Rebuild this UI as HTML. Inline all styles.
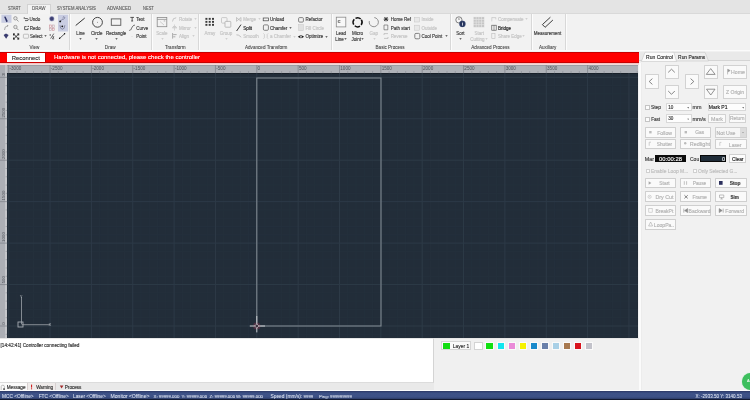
<!DOCTYPE html>
<html><head><meta charset="utf-8">
<style>
*{box-sizing:border-box;margin:0;padding:0}
html,body{width:750px;height:400px;overflow:hidden;will-change:transform;background:#f1f1f1;font-family:"Liberation Sans",sans-serif;color:#333}
.a{position:absolute;white-space:nowrap}
#tabbar{left:0;top:0;width:750px;height:13px;background:#e4e4e4}
.tab{position:absolute;top:4px;font-size:4.6px;color:#444;line-height:9px}
#ribbon{left:0;top:13px;width:750px;height:38px;background:#f2f2f2;border-top:1px solid #d9d9d9;border-bottom:1px solid #fbfbfb}
.sep{position:absolute;top:14px;width:1px;height:36px;background:#d8d8d8;box-shadow:1px 0 0 #fcfcfc}
.glabel{position:absolute;top:43px;font-size:4.6px;color:#444;line-height:7px}
.r{position:absolute;white-space:nowrap;line-height:6px;font-size:4.5px;-webkit-text-stroke-width:0.15px}
.dis{color:#b5b5b5}
#redbar{left:0;top:52px;width:639px;height:11px;background:#fe0000;border-top:1px solid #c80000;border-bottom:1px solid #c80000}
#rulerT{left:0;top:64.8px;width:638px;height:8.2px;background:#afb2b8;border-top:0.8px solid #9c9fa5}
#rulerL{left:0;top:65px;width:7px;height:273px;background:linear-gradient(90deg,#acafb5 0,#acafb5 4.8px,#c4c6ca 5.2px,#c4c6ca 7px)}
#canvas{left:7px;top:73px;width:631px;height:265px;background:#222d39;overflow:hidden;box-shadow:inset -1px 0 0 #161e27, inset 0 1px 0 #182029}
#msg{left:0;top:339px;width:434px;height:44px;background:#fff;border-top:1px solid #e6e6e6}
#layers{left:434px;top:338px;width:205px;height:53px;background:#f0f0f0;border-left:1px solid #dcdcdc}
#msgtabs{left:0;top:383px;width:434px;height:8px;background:#e8e8e8}
#status{left:0;top:391px;width:750px;height:9px;background:#2e4170;color:#e8ecf4;font-size:4.5px;line-height:9px}
#panel{left:640px;top:51px;width:110px;height:340px;background:#f1f1f1;border-left:1px solid #fafafa}
.btn{position:absolute;background:#f9f9f9;border:1px solid #dedede;font-size:4.8px;color:#bdbdbd;text-align:center;line-height:9px}
.sw{position:absolute;top:342px;width:8px;height:8px;border:1px solid #ddd}
</style></head><body>
<div id="tabbar" class="a"></div>
<div id="ribbon" class="a"></div>
<div class="a" style="left:26.8px;top:3.5px;width:23.8px;height:10.5px;background:#f3f3f3;border:1px solid #d2d2d2;border-bottom:none"></div>
<div class="sep" style="left:69px"></div>
<div class="sep" style="left:151px"></div>
<div class="sep" style="left:198px"></div>
<div class="sep" style="left:330.5px"></div>
<div class="sep" style="left:449.6px"></div>
<div class="sep" style="left:530.5px"></div>
<div class="sep" style="left:564.5px"></div>
<div class="r" style="left:8.1px;top:5.9px;color:#505050;font-size:4.9px;-webkit-text-stroke-width:0.08px;transform:scaleX(0.821);transform-origin:0 0;">START</div>
<div class="r" style="left:31.9px;top:5.9px;color:#505050;font-size:4.9px;-webkit-text-stroke-width:0.08px;transform:scaleX(0.919);transform-origin:0 0;">DRAW</div>
<div class="r" style="left:56.8px;top:5.9px;color:#505050;font-size:4.9px;-webkit-text-stroke-width:0.08px;transform:scaleX(0.867);transform-origin:0 0;">SYSTEM ANALYSIS</div>
<div class="r" style="left:107.4px;top:5.9px;color:#505050;font-size:4.9px;-webkit-text-stroke-width:0.08px;transform:scaleX(0.901);transform-origin:0 0;">ADVANCED</div>
<div class="r" style="left:142.6px;top:5.9px;color:#505050;font-size:4.9px;-webkit-text-stroke-width:0.08px;transform:scaleX(0.829);transform-origin:0 0;">NEST</div>
<div class="r" style="left:14.5px;width:40px;text-align:center;top:45.1px;color:#3a3a3a;font-size:4.6px;-webkit-text-stroke-width:0.06px;">View</div>
<div class="r" style="left:90.2px;width:40px;text-align:center;top:45.1px;color:#3a3a3a;font-size:4.6px;-webkit-text-stroke-width:0.06px;">Draw</div>
<div class="r" style="left:155.3px;width:40px;text-align:center;top:45.1px;color:#3a3a3a;font-size:4.6px;-webkit-text-stroke-width:0.06px;">Transform</div>
<div class="r" style="left:245px;width:40px;text-align:center;top:45.1px;color:#3a3a3a;font-size:4.6px;-webkit-text-stroke-width:0.06px;">Advanced Transform</div>
<div class="r" style="left:370.1px;width:40px;text-align:center;top:45.1px;color:#3a3a3a;font-size:4.6px;-webkit-text-stroke-width:0.06px;">Basic Process</div>
<div class="r" style="left:470.4px;width:40px;text-align:center;top:45.1px;color:#3a3a3a;font-size:4.6px;-webkit-text-stroke-width:0.06px;">Advanced Process</div>
<div class="r" style="left:527.7px;width:40px;text-align:center;top:45.1px;color:#3a3a3a;font-size:4.6px;-webkit-text-stroke-width:0.06px;">Auxiliary</div>
<div class="r" style="left:29.5px;top:16.9px;color:#3c3c3c;font-size:4.5px;">Undo</div>
<div class="r" style="left:29.8px;top:25.6px;color:#3c3c3c;font-size:4.5px;">Redo</div>
<div class="r" style="left:30px;top:34.2px;color:#3c3c3c;font-size:4.5px;">Select</div>
<svg class="a" style="left:43.8px;top:35.3px" width="3" height="2"><path d="M0.3 0.3 L2.7 0.3 L1.5 1.8Z" fill="#3c3c3c"/></svg>
<div class="r" style="left:60.400000000000006px;width:40px;text-align:center;top:31.1px;color:#3c3c3c;font-size:4.5px;">Line</div>
<svg class="a" style="left:78.9px;top:37.5px" width="3" height="2"><path d="M0.3 0.3 L2.7 0.3 L1.5 1.8Z" fill="#3c3c3c"/></svg>
<div class="r" style="left:76.8px;width:40px;text-align:center;top:31.1px;color:#3c3c3c;font-size:4.5px;">Circle</div>
<svg class="a" style="left:95.3px;top:37.5px" width="3" height="2"><path d="M0.3 0.3 L2.7 0.3 L1.5 1.8Z" fill="#3c3c3c"/></svg>
<div class="r" style="left:96.2px;width:40px;text-align:center;top:31.1px;color:#3c3c3c;font-size:4.5px;">Rectangle</div>
<svg class="a" style="left:114.5px;top:37.5px" width="3" height="2"><path d="M0.3 0.3 L2.7 0.3 L1.5 1.8Z" fill="#3c3c3c"/></svg>
<div class="r" style="left:136.3px;top:16.8px;color:#3c3c3c;font-size:4.5px;">Text</div>
<div class="r" style="left:136.3px;top:25.6px;color:#3c3c3c;font-size:4.5px;">Curve</div>
<div class="r" style="left:136.3px;top:34.1px;color:#3c3c3c;font-size:4.5px;">Point</div>
<div class="r" style="left:142px;width:40px;text-align:center;top:31.1px;color:#c4c4c4;font-size:4.5px;">Scale</div>
<svg class="a" style="left:160.5px;top:37.5px" width="3" height="2"><path d="M0.3 0.3 L2.7 0.3 L1.5 1.8Z" fill="#c4c4c4"/></svg>
<div class="r" style="left:178.9px;top:17.0px;color:#c4c4c4;font-size:4.5px;">Rotate</div>
<svg class="a" style="left:193.5px;top:18.1px" width="3" height="2"><path d="M0.3 0.3 L2.7 0.3 L1.5 1.8Z" fill="#c4c4c4"/></svg>
<div class="r" style="left:178.9px;top:25.7px;color:#c4c4c4;font-size:4.5px;">Mirror</div>
<svg class="a" style="left:193.5px;top:26.8px" width="3" height="2"><path d="M0.3 0.3 L2.7 0.3 L1.5 1.8Z" fill="#c4c4c4"/></svg>
<div class="r" style="left:178.9px;top:34.3px;color:#c4c4c4;font-size:4.5px;">Align</div>
<svg class="a" style="left:191.8px;top:35.4px" width="3" height="2"><path d="M0.3 0.3 L2.7 0.3 L1.5 1.8Z" fill="#c4c4c4"/></svg>
<div class="r" style="left:190px;width:40px;text-align:center;top:31.1px;color:#c4c4c4;font-size:4.5px;">Array</div>
<div class="r" style="left:206px;width:40px;text-align:center;top:31.1px;color:#c4c4c4;font-size:4.5px;">Group</div>
<svg class="a" style="left:224.5px;top:37.5px" width="3" height="2"><path d="M0.3 0.3 L2.7 0.3 L1.5 1.8Z" fill="#c4c4c4"/></svg>
<div class="r" style="left:243.3px;top:17.2px;color:#c4c4c4;font-size:4.5px;">Merge</div>
<svg class="a" style="left:257.9px;top:18.3px" width="3" height="2"><path d="M0.3 0.3 L2.7 0.3 L1.5 1.8Z" fill="#c4c4c4"/></svg>
<div class="r" style="left:243.3px;top:25.6px;color:#222;font-size:4.5px;">Split</div>
<div class="r" style="left:243.3px;top:34.4px;color:#c4c4c4;font-size:4.5px;">Smooth</div>
<div class="r" style="left:269.9px;top:17.2px;color:#3c3c3c;font-size:4.5px;">Unload</div>
<div class="r" style="left:269.9px;top:25.6px;color:#3c3c3c;font-size:4.5px;">Chamfer</div>
<svg class="a" style="left:289.0px;top:26.7px" width="3" height="2"><path d="M0.3 0.3 L2.7 0.3 L1.5 1.8Z" fill="#3c3c3c"/></svg>
<div class="r" style="left:269.9px;top:34.4px;color:#c4c4c4;font-size:4.5px;">a Chamfer</div>
<svg class="a" style="left:292.5px;top:35.5px" width="3" height="2"><path d="M0.3 0.3 L2.7 0.3 L1.5 1.8Z" fill="#c4c4c4"/></svg>
<div class="r" style="left:305.4px;top:17.2px;color:#3c3c3c;font-size:4.5px;">Refactor</div>
<div class="r" style="left:305.4px;top:25.6px;color:#c4c4c4;font-size:4.5px;">Fill Circle</div>
<div class="r" style="left:305.4px;top:34.4px;color:#3c3c3c;font-size:4.5px;">Optimize</div>
<svg class="a" style="left:325.1px;top:35.5px" width="3" height="2"><path d="M0.3 0.3 L2.7 0.3 L1.5 1.8Z" fill="#3c3c3c"/></svg>
<div class="r" style="left:321px;width:40px;text-align:center;top:30.9px;color:#3c3c3c;font-size:4.5px;">Lead</div>
<div class="r" style="left:335.3px;top:36.7px;color:#3c3c3c;font-size:4.5px;">Line</div>
<svg class="a" style="left:344.1px;top:37.8px" width="3" height="2"><path d="M0.3 0.3 L2.7 0.3 L1.5 1.8Z" fill="#3c3c3c"/></svg>
<div class="r" style="left:337.6px;width:40px;text-align:center;top:30.9px;color:#3c3c3c;font-size:4.5px;">Micro</div>
<div class="r" style="left:351.4px;top:36.7px;color:#3c3c3c;font-size:4.5px;">Joint</div>
<svg class="a" style="left:360.9px;top:37.8px" width="3" height="2"><path d="M0.3 0.3 L2.7 0.3 L1.5 1.8Z" fill="#3c3c3c"/></svg>
<div class="r" style="left:353.7px;width:40px;text-align:center;top:30.9px;color:#c4c4c4;font-size:4.5px;">Gap</div>
<svg class="a" style="left:372.5px;top:37.5px" width="3" height="2"><path d="M0.3 0.3 L2.7 0.3 L1.5 1.8Z" fill="#c4c4c4"/></svg>
<div class="r" style="left:390.8px;top:17.1px;color:#3c3c3c;font-size:4.5px;">Home Ref</div>
<div class="r" style="left:390.8px;top:25.8px;color:#3c3c3c;font-size:4.5px;">Path start</div>
<div class="r" style="left:390.8px;top:34.3px;color:#c4c4c4;font-size:4.5px;">Reverse</div>
<div class="r" style="left:421.5px;top:17.1px;color:#c4c4c4;font-size:4.5px;">Inside</div>
<div class="r" style="left:421.5px;top:25.8px;color:#c4c4c4;font-size:4.5px;">Outside</div>
<div class="r" style="left:421.5px;top:34.3px;color:#3c3c3c;font-size:4.5px;">Cool Point</div>
<svg class="a" style="left:444.5px;top:35.4px" width="3" height="2"><path d="M0.3 0.3 L2.7 0.3 L1.5 1.8Z" fill="#3c3c3c"/></svg>
<div class="r" style="left:440.5px;width:40px;text-align:center;top:30.6px;color:#3c3c3c;font-size:4.5px;">Sort</div>
<svg class="a" style="left:459.0px;top:37.5px" width="3" height="2"><path d="M0.3 0.3 L2.7 0.3 L1.5 1.8Z" fill="#3c3c3c"/></svg>
<div class="r" style="left:459.3px;width:40px;text-align:center;top:30.9px;color:#c4c4c4;font-size:4.5px;">Start</div>
<div class="r" style="left:470.2px;top:36.7px;color:#c4c4c4;font-size:4.5px;">Cutting</div>
<svg class="a" style="left:485.3px;top:37.8px" width="3" height="2"><path d="M0.3 0.3 L2.7 0.3 L1.5 1.8Z" fill="#c4c4c4"/></svg>
<div class="r" style="left:498px;top:17.1px;color:#c4c4c4;font-size:4.5px;">Compensate</div>
<svg class="a" style="left:525.2px;top:18.2px" width="3" height="2"><path d="M0.3 0.3 L2.7 0.3 L1.5 1.8Z" fill="#c4c4c4"/></svg>
<div class="r" style="left:498px;top:25.9px;color:#222;font-size:4.5px;">Bridge</div>
<div class="r" style="left:498px;top:34.2px;color:#c4c4c4;font-size:4.5px;">Share Edge</div>
<svg class="a" style="left:522.2px;top:35.3px" width="3" height="2"><path d="M0.3 0.3 L2.7 0.3 L1.5 1.8Z" fill="#c4c4c4"/></svg>
<div class="r" style="left:527.5px;width:40px;text-align:center;top:30.6px;color:#3c3c3c;font-size:4.5px;">Measurement</div>
<svg class="a" style="left:0;top:0" width="750" height="52" viewBox="0 0 750 52"><rect x="1.4" y="14.7" width="10.1" height="8.1" fill="#c9cde2"/><rect x="58" y="14.7" width="10.1" height="16.8" fill="#c9cde2"/><path d="M4.1 16.7 L5.5 16.6 L7.8 21.2 L6.4 22.2 Z" fill="#2b3063"/><circle cx="15.4" cy="18.3" r="1.7" fill="#e4e4e4" stroke="#8a8a8a" stroke-width="0.75"/><line x1="16.6" y1="19.5" x2="18.5" y2="21.400000000000002" stroke="#8a8a8a" stroke-width="0.9"/><circle cx="15.4" cy="27.0" r="1.7" fill="#e4e4e4" stroke="#8a8a8a" stroke-width="0.75"/><line x1="16.6" y1="28.2" x2="18.5" y2="30.1" stroke="#8a8a8a" stroke-width="0.9"/><path d="M24.6 18.6 H27.2 Q28.3 18.6 28.3 19.6 Q28.3 20.6 27.2 20.6 H25" fill="none" stroke="#333" stroke-width="0.75"/><circle cx="24.2" cy="17.9" r="0.55" fill="#222"/><path d="M24.6 26.6 V29.6 H28 V28 M24.6 26.6 H26.6" fill="none" stroke="#333" stroke-width="0.75"/><circle cx="28.2" cy="26.4" r="0.6" fill="#222"/><rect x="23.4" y="34.2" width="5.2" height="4" rx="0.6" fill="none" stroke="#aaa" stroke-width="0.7"/><path d="M4.5 30 Q4.5 26 7.8 25.8" fill="none" stroke="#999" stroke-width="0.8"/><path d="M7 24.8 L8.6 25.8 L7 26.8Z" fill="#999"/><path d="M3.6 35 L6 33.5 L8.6 35 L6.1 38.7 Z" fill="#3a3c70"/><path d="M13.5 34 L18.7 39 M18.7 34 L13.5 39" stroke="#222" stroke-width="0.9"/><path d="M13 33.5h2v0.9h-1.1v1.1H13z M19.2 33.5h-2v0.9h1.1v1.1h0.9z M13 39.5h2v-0.9h-1.1v-1.1H13z M19.2 39.5h-2v-0.9h1.1v-1.1h0.9z" fill="#222"/><rect x="49.3" y="16.4" width="5" height="4.8" fill="#dfe0ea"/><circle cx="51.8" cy="18.8" r="2.2" fill="#3c3e72" stroke="#8c8eb4" stroke-width="0.5"/><rect x="49.4" y="24.6" width="5" height="6.2" fill="#f4eef0"/><rect x="49.7" y="25" width="1.9" height="2.3" fill="none" stroke="#c88a92" stroke-width="0.55"/><rect x="52.3" y="25" width="1.9" height="2.3" fill="none" stroke="#b8a0a8" stroke-width="0.55"/><rect x="49.7" y="28.2" width="1.9" height="2.3" fill="none" stroke="#b8a0a8" stroke-width="0.55"/><rect x="52.3" y="28.2" width="1.9" height="2.3" fill="none" stroke="#c88a92" stroke-width="0.55"/><path d="M50.2 34 V36 M53.8 33.6 L50.6 38.6 M52.4 36.8 H54 L52.4 38.8 H54.2" fill="none" stroke="#333" stroke-width="0.7"/><circle cx="45.3" cy="36.4" r="0" fill="#333"/><path d="M60.2 21.2 L62.4 19.4 L63.4 19.4 L64.8 17.8 L64 16.6 L62.6 17.8" fill="none" stroke="#6e7190" stroke-width="0.75"/><circle cx="60.2" cy="21.4" r="0.95" fill="#111"/><path d="M60 25.2 Q60 29.2 62.4 29.2 Q64.8 29.2 64.8 25.2" fill="none" stroke="#7a7d98" stroke-width="0.8"/><circle cx="62.3" cy="26.3" r="0.9" fill="#111"/><line x1="59.5" y1="38.5" x2="64.8" y2="33.6" stroke="#333" stroke-width="0.8"/><circle cx="59.6" cy="38.3" r="0.7" fill="#111"/><circle cx="64.6" cy="33.8" r="0.7" fill="#111"/><line x1="75.7" y1="25.5" x2="84.7" y2="18.1" stroke="#333" stroke-width="1"/><circle cx="97.5" cy="22.3" r="4.9" fill="none" stroke="#333" stroke-width="0.9"/><circle cx="97.5" cy="22.3" r="0.45" fill="#444"/><rect x="111.3" y="18.9" width="9.5" height="6.4" fill="none" stroke="#5a5a5a" stroke-width="0.9"/><path d="M130.3 17.4 H134 M132.15 17.4 V21 M131.2 21 H133.1" fill="none" stroke="#333" stroke-width="0.8"/><path d="M129.3 30.4 C131.2 30.4 131.2 28.6 131.9 27.6 C132.6 26.6 133 25.2 134.9 25.1" fill="none" stroke="#333" stroke-width="0.75"/><circle cx="132" cy="36.4" r="0.25" fill="#666"/><rect x="157.2" y="17.4" width="9.6" height="9.3" fill="none" stroke="#8a8a8a" stroke-width="0.8"/><line x1="157.2" y1="19.4" x2="166.8" y2="19.4" stroke="#8a8a8a" stroke-width="0.7"/><path d="M160 21.5 L164 25 M163.5 21 L165 20.4 L164.6 22" fill="none" stroke="#aaa" stroke-width="0.5"/><path d="M172.5 21.5 Q172.5 17.8 176.2 17.8" fill="none" stroke="#b8b8b8" stroke-width="0.8"/><path d="M174.5 24.5 V30.5 M173.8 26 L172.4 28 L173.8 28 Z M175.2 26 L176.8 28 L175.2 28Z" fill="none" stroke="#c0c0c0" stroke-width="0.6"/><path d="M172.6 33 V38.6 M173.2 34.6 H176.6 M173.2 36.8 H175.4" fill="none" stroke="#999" stroke-width="0.8"/><rect x="205.4" y="17.9" width="2" height="1.9" fill="#3a3a3a"/><rect x="205.4" y="20.9" width="2" height="1.9" fill="#3a3a3a"/><rect x="205.4" y="23.9" width="2" height="1.9" fill="#3a3a3a"/><rect x="208.7" y="17.9" width="2" height="1.9" fill="#3a3a3a"/><rect x="208.7" y="20.9" width="2" height="1.9" fill="#3a3a3a"/><rect x="208.7" y="23.9" width="2" height="1.9" fill="#3a3a3a"/><rect x="212.0" y="17.9" width="2" height="1.9" fill="#3a3a3a"/><rect x="212.0" y="20.9" width="2" height="1.9" fill="#3a3a3a"/><rect x="212.0" y="23.9" width="2" height="1.9" fill="#3a3a3a"/><rect x="221.5" y="17.6" width="5.5" height="5.5" rx="0.8" fill="#f3f3f3" stroke="#b8b8b8" stroke-width="0.7"/><rect x="225" y="21.4" width="5.8" height="5.8" rx="0.6" fill="#f3f3f3" stroke="#a8a8a8" stroke-width="0.7"/><path d="M236.5 17.6 L241 21.2 M241 17.6 L236.5 21.2 M236.5 17.4 V21.4 M241 17.4 V21.4" fill="none" stroke="#aaa" stroke-width="0.6"/><line x1="236.6" y1="31" x2="241" y2="24.6" stroke="#222" stroke-width="0.9"/><path d="M236.4 34.8 Q238.6 34.4 241.2 37.2" fill="none" stroke="#aaa" stroke-width="0.7"/><rect x="263.2" y="18" width="5.3" height="2.8" fill="none" stroke="#444" stroke-width="0.7"/><rect x="263.4" y="24.9" width="5" height="5.4" rx="1.1" fill="none" stroke="#555" stroke-width="0.7"/><path d="M263.4 33.4 L264.4 34.4 M268.2 33.4 L267.2 34.4 M263.4 38.8 L264.4 37.8 M268.2 38.8 L267.2 37.8 M264.4 34.4 V37.8 M267.2 34.4 V37.8" fill="none" stroke="#bbb" stroke-width="0.6"/><rect x="298.6" y="17.6" width="4.8" height="4.5" rx="1" fill="none" stroke="#555" stroke-width="0.7"/><rect x="298.6" y="24.6" width="4.8" height="6" fill="#e0e0e0" stroke="#c8c8c8" stroke-width="0.5"/><path d="M297.8 36.7 Q300.9 33.6 304.1 36.7 Q300.9 39.6 297.8 36.7Z" fill="#1a1a1a"/><circle cx="300.95" cy="36.7" r="0.95" fill="#f3f3f3"/><circle cx="300.95" cy="36.7" r="0.45" fill="#1a1a1a"/><rect x="336.3" y="17.2" width="9.5" height="9.7" fill="#f8f8f8" stroke="#8a8a8a" stroke-width="0.8"/><path d="M340.4 20.6 H338.2 V22.4 H340.4" fill="none" stroke="#333" stroke-width="0.6"/><circle cx="357.6" cy="22.3" r="4.5" fill="none" stroke="#111" stroke-width="1.5" stroke-dasharray="5.4 1.67" transform="rotate(-34.4 357.6 22.3)"/><path d="M374.3 17.55 A4.6 4.6 0 1 1 369.3 21.1" fill="none" stroke="#8a8a8a" stroke-width="0.95"/><path d="M384 17.4 L388 21 M388 17.4 L384 21 M386 17 V21.4 M383.7 19.2 H388.3" stroke="#222" stroke-width="0.8"/><path d="M384 25 H387.8 V29.8 H384 Z" fill="none" stroke="#555" stroke-width="0.6"/><path d="M384 33.6 H388 M384 38.4 H388 M384 33.6 V35 M388 38.4 V37" fill="none" stroke="#aaa" stroke-width="0.6"/><rect x="414.6" y="17.4" width="5" height="4.6" fill="#e8e8e8" stroke="#c4c4c4" stroke-width="0.5"/><rect x="414.6" y="25.2" width="5" height="5" fill="#e8e8e8" stroke="#c4c4c4" stroke-width="0.5"/><rect x="414.8" y="33.4" width="5" height="5.4" rx="1.2" fill="none" stroke="#555" stroke-width="0.7"/><circle cx="458.9" cy="19.9" r="3.1" fill="#f6f6f6" stroke="#555" stroke-width="0.7"/><path d="M458.6 17.9 L458.9 19.9 L460 18.4" fill="none" stroke="#555" stroke-width="0.45"/><circle cx="462.4" cy="23.9" r="3.1" fill="#26355e" stroke="#5a6890" stroke-width="0.3"/><rect x="462" y="23" width="0.8" height="2.6" fill="#e8ecf4"/><circle cx="462.4" cy="22.2" r="0.42" fill="#e8ecf4"/><rect x="473.4" y="16.8" width="11.2" height="10.8" fill="#e6e6e6"/><rect x="473.70" y="17.10" width="2.1" height="2.0" fill="#c6c6c6"/><rect x="473.70" y="19.75" width="2.1" height="2.0" fill="#c6c6c6"/><rect x="473.70" y="22.40" width="2.1" height="2.0" fill="#c6c6c6"/><rect x="473.70" y="25.05" width="2.1" height="2.0" fill="#c6c6c6"/><rect x="476.45" y="17.10" width="2.1" height="2.0" fill="#c6c6c6"/><rect x="476.45" y="19.75" width="2.1" height="2.0" fill="#c6c6c6"/><rect x="476.45" y="22.40" width="2.1" height="2.0" fill="#c6c6c6"/><rect x="476.45" y="25.05" width="2.1" height="2.0" fill="#c6c6c6"/><rect x="479.20" y="17.10" width="2.1" height="2.0" fill="#c6c6c6"/><rect x="479.20" y="19.75" width="2.1" height="2.0" fill="#c6c6c6"/><rect x="479.20" y="22.40" width="2.1" height="2.0" fill="#c6c6c6"/><rect x="479.20" y="25.05" width="2.1" height="2.0" fill="#c6c6c6"/><rect x="481.95" y="17.10" width="2.1" height="2.0" fill="#c6c6c6"/><rect x="481.95" y="19.75" width="2.1" height="2.0" fill="#c6c6c6"/><rect x="481.95" y="22.40" width="2.1" height="2.0" fill="#c6c6c6"/><rect x="481.95" y="25.05" width="2.1" height="2.0" fill="#c6c6c6"/><path d="M491.8 17.4 V21.4 M491.8 17.6 H495.8 V19.4" fill="none" stroke="#bbb" stroke-width="0.6"/><rect x="491.8" y="25.2" width="4.4" height="5" fill="none" stroke="#444" stroke-width="0.6"/><line x1="494" y1="25.2" x2="494" y2="30.2" stroke="#444" stroke-width="0.5"/><rect x="491.8" y="33.6" width="3.2" height="5" fill="none" stroke="#bbb" stroke-width="0.6"/><path d="M550.4 17.2 L542.4 24.6 L545.1 27.3 L552.9 20" fill="none" stroke="#333" stroke-width="0.95" stroke-linejoin="round"/></svg>
<div id="redbar" class="a">
  <div class="a" style="left:6.5px;top:0;width:38.7px;height:9px;background:#fff;font-size:5.9px;line-height:10.6px;text-align:center;color:#2a2a2a;box-shadow:0.6px 0 0 #a00000;-webkit-text-stroke-width:0.12px">Reconnect</div>
  <div class="a" style="left:54px;top:0;font-size:6px;line-height:9px;color:#fff;-webkit-text-stroke-width:0.12px">Hardware is not connected, please check the controller</div>
</div>
<div class="a" style="left:0;top:63px;width:639px;height:1.8px;background:linear-gradient(#f4b8b8,#f2e6e6)"></div>
<div id="rulerT" class="a"></div>
<svg class="a" style="left:7px;top:65px" width="631" height="8" viewBox="0 0 631 8">
<line x1="1.70" y1="0" x2="1.70" y2="8" stroke="#7c7f86" stroke-width="0.7"/>
<text x="2.50" y="5.3" font-size="4.6" fill="#50535a" font-family="Liberation Sans">-3000</text>
<line x1="9.97" y1="6" x2="9.97" y2="8" stroke="#8a8d94" stroke-width="0.6"/>
<line x1="18.24" y1="6" x2="18.24" y2="8" stroke="#8a8d94" stroke-width="0.6"/>
<line x1="26.51" y1="6" x2="26.51" y2="8" stroke="#8a8d94" stroke-width="0.6"/>
<line x1="34.78" y1="6" x2="34.78" y2="8" stroke="#8a8d94" stroke-width="0.6"/>
<line x1="43.05" y1="0" x2="43.05" y2="8" stroke="#7c7f86" stroke-width="0.7"/>
<text x="43.85" y="5.3" font-size="4.6" fill="#50535a" font-family="Liberation Sans">-2500</text>
<line x1="51.32" y1="6" x2="51.32" y2="8" stroke="#8a8d94" stroke-width="0.6"/>
<line x1="59.59" y1="6" x2="59.59" y2="8" stroke="#8a8d94" stroke-width="0.6"/>
<line x1="67.86" y1="6" x2="67.86" y2="8" stroke="#8a8d94" stroke-width="0.6"/>
<line x1="76.13" y1="6" x2="76.13" y2="8" stroke="#8a8d94" stroke-width="0.6"/>
<line x1="84.40" y1="0" x2="84.40" y2="8" stroke="#7c7f86" stroke-width="0.7"/>
<text x="85.20" y="5.3" font-size="4.6" fill="#50535a" font-family="Liberation Sans">-2000</text>
<line x1="92.67" y1="6" x2="92.67" y2="8" stroke="#8a8d94" stroke-width="0.6"/>
<line x1="100.94" y1="6" x2="100.94" y2="8" stroke="#8a8d94" stroke-width="0.6"/>
<line x1="109.21" y1="6" x2="109.21" y2="8" stroke="#8a8d94" stroke-width="0.6"/>
<line x1="117.48" y1="6" x2="117.48" y2="8" stroke="#8a8d94" stroke-width="0.6"/>
<line x1="125.75" y1="0" x2="125.75" y2="8" stroke="#7c7f86" stroke-width="0.7"/>
<text x="126.55" y="5.3" font-size="4.6" fill="#50535a" font-family="Liberation Sans">-1500</text>
<line x1="134.02" y1="6" x2="134.02" y2="8" stroke="#8a8d94" stroke-width="0.6"/>
<line x1="142.29" y1="6" x2="142.29" y2="8" stroke="#8a8d94" stroke-width="0.6"/>
<line x1="150.56" y1="6" x2="150.56" y2="8" stroke="#8a8d94" stroke-width="0.6"/>
<line x1="158.83" y1="6" x2="158.83" y2="8" stroke="#8a8d94" stroke-width="0.6"/>
<line x1="167.10" y1="0" x2="167.10" y2="8" stroke="#7c7f86" stroke-width="0.7"/>
<text x="167.90" y="5.3" font-size="4.6" fill="#50535a" font-family="Liberation Sans">-1000</text>
<line x1="175.37" y1="6" x2="175.37" y2="8" stroke="#8a8d94" stroke-width="0.6"/>
<line x1="183.64" y1="6" x2="183.64" y2="8" stroke="#8a8d94" stroke-width="0.6"/>
<line x1="191.91" y1="6" x2="191.91" y2="8" stroke="#8a8d94" stroke-width="0.6"/>
<line x1="200.18" y1="6" x2="200.18" y2="8" stroke="#8a8d94" stroke-width="0.6"/>
<line x1="208.45" y1="0" x2="208.45" y2="8" stroke="#7c7f86" stroke-width="0.7"/>
<text x="209.25" y="5.3" font-size="4.6" fill="#50535a" font-family="Liberation Sans">-500</text>
<line x1="216.72" y1="6" x2="216.72" y2="8" stroke="#8a8d94" stroke-width="0.6"/>
<line x1="224.99" y1="6" x2="224.99" y2="8" stroke="#8a8d94" stroke-width="0.6"/>
<line x1="233.26" y1="6" x2="233.26" y2="8" stroke="#8a8d94" stroke-width="0.6"/>
<line x1="241.53" y1="6" x2="241.53" y2="8" stroke="#8a8d94" stroke-width="0.6"/>
<line x1="249.80" y1="0" x2="249.80" y2="8" stroke="#7c7f86" stroke-width="0.7"/>
<text x="250.60" y="5.3" font-size="4.6" fill="#50535a" font-family="Liberation Sans">0</text>
<line x1="258.07" y1="6" x2="258.07" y2="8" stroke="#8a8d94" stroke-width="0.6"/>
<line x1="266.34" y1="6" x2="266.34" y2="8" stroke="#8a8d94" stroke-width="0.6"/>
<line x1="274.61" y1="6" x2="274.61" y2="8" stroke="#8a8d94" stroke-width="0.6"/>
<line x1="282.88" y1="6" x2="282.88" y2="8" stroke="#8a8d94" stroke-width="0.6"/>
<line x1="291.15" y1="0" x2="291.15" y2="8" stroke="#7c7f86" stroke-width="0.7"/>
<text x="291.95" y="5.3" font-size="4.6" fill="#50535a" font-family="Liberation Sans">500</text>
<line x1="299.42" y1="6" x2="299.42" y2="8" stroke="#8a8d94" stroke-width="0.6"/>
<line x1="307.69" y1="6" x2="307.69" y2="8" stroke="#8a8d94" stroke-width="0.6"/>
<line x1="315.96" y1="6" x2="315.96" y2="8" stroke="#8a8d94" stroke-width="0.6"/>
<line x1="324.23" y1="6" x2="324.23" y2="8" stroke="#8a8d94" stroke-width="0.6"/>
<line x1="332.50" y1="0" x2="332.50" y2="8" stroke="#7c7f86" stroke-width="0.7"/>
<text x="333.30" y="5.3" font-size="4.6" fill="#50535a" font-family="Liberation Sans">1000</text>
<line x1="340.77" y1="6" x2="340.77" y2="8" stroke="#8a8d94" stroke-width="0.6"/>
<line x1="349.04" y1="6" x2="349.04" y2="8" stroke="#8a8d94" stroke-width="0.6"/>
<line x1="357.31" y1="6" x2="357.31" y2="8" stroke="#8a8d94" stroke-width="0.6"/>
<line x1="365.58" y1="6" x2="365.58" y2="8" stroke="#8a8d94" stroke-width="0.6"/>
<line x1="373.85" y1="0" x2="373.85" y2="8" stroke="#7c7f86" stroke-width="0.7"/>
<text x="374.65" y="5.3" font-size="4.6" fill="#50535a" font-family="Liberation Sans">1500</text>
<line x1="382.12" y1="6" x2="382.12" y2="8" stroke="#8a8d94" stroke-width="0.6"/>
<line x1="390.39" y1="6" x2="390.39" y2="8" stroke="#8a8d94" stroke-width="0.6"/>
<line x1="398.66" y1="6" x2="398.66" y2="8" stroke="#8a8d94" stroke-width="0.6"/>
<line x1="406.93" y1="6" x2="406.93" y2="8" stroke="#8a8d94" stroke-width="0.6"/>
<line x1="415.20" y1="0" x2="415.20" y2="8" stroke="#7c7f86" stroke-width="0.7"/>
<text x="416.00" y="5.3" font-size="4.6" fill="#50535a" font-family="Liberation Sans">2000</text>
<line x1="423.47" y1="6" x2="423.47" y2="8" stroke="#8a8d94" stroke-width="0.6"/>
<line x1="431.74" y1="6" x2="431.74" y2="8" stroke="#8a8d94" stroke-width="0.6"/>
<line x1="440.01" y1="6" x2="440.01" y2="8" stroke="#8a8d94" stroke-width="0.6"/>
<line x1="448.28" y1="6" x2="448.28" y2="8" stroke="#8a8d94" stroke-width="0.6"/>
<line x1="456.55" y1="0" x2="456.55" y2="8" stroke="#7c7f86" stroke-width="0.7"/>
<text x="457.35" y="5.3" font-size="4.6" fill="#50535a" font-family="Liberation Sans">2500</text>
<line x1="464.82" y1="6" x2="464.82" y2="8" stroke="#8a8d94" stroke-width="0.6"/>
<line x1="473.09" y1="6" x2="473.09" y2="8" stroke="#8a8d94" stroke-width="0.6"/>
<line x1="481.36" y1="6" x2="481.36" y2="8" stroke="#8a8d94" stroke-width="0.6"/>
<line x1="489.63" y1="6" x2="489.63" y2="8" stroke="#8a8d94" stroke-width="0.6"/>
<line x1="497.90" y1="0" x2="497.90" y2="8" stroke="#7c7f86" stroke-width="0.7"/>
<text x="498.70" y="5.3" font-size="4.6" fill="#50535a" font-family="Liberation Sans">3000</text>
<line x1="506.17" y1="6" x2="506.17" y2="8" stroke="#8a8d94" stroke-width="0.6"/>
<line x1="514.44" y1="6" x2="514.44" y2="8" stroke="#8a8d94" stroke-width="0.6"/>
<line x1="522.71" y1="6" x2="522.71" y2="8" stroke="#8a8d94" stroke-width="0.6"/>
<line x1="530.98" y1="6" x2="530.98" y2="8" stroke="#8a8d94" stroke-width="0.6"/>
<line x1="539.25" y1="0" x2="539.25" y2="8" stroke="#7c7f86" stroke-width="0.7"/>
<text x="540.05" y="5.3" font-size="4.6" fill="#50535a" font-family="Liberation Sans">3500</text>
<line x1="547.52" y1="6" x2="547.52" y2="8" stroke="#8a8d94" stroke-width="0.6"/>
<line x1="555.79" y1="6" x2="555.79" y2="8" stroke="#8a8d94" stroke-width="0.6"/>
<line x1="564.06" y1="6" x2="564.06" y2="8" stroke="#8a8d94" stroke-width="0.6"/>
<line x1="572.33" y1="6" x2="572.33" y2="8" stroke="#8a8d94" stroke-width="0.6"/>
<line x1="580.60" y1="0" x2="580.60" y2="8" stroke="#7c7f86" stroke-width="0.7"/>
<text x="581.40" y="5.3" font-size="4.6" fill="#50535a" font-family="Liberation Sans">4000</text>
<line x1="588.87" y1="6" x2="588.87" y2="8" stroke="#8a8d94" stroke-width="0.6"/>
<line x1="597.14" y1="6" x2="597.14" y2="8" stroke="#8a8d94" stroke-width="0.6"/>
<line x1="605.41" y1="6" x2="605.41" y2="8" stroke="#8a8d94" stroke-width="0.6"/>
<line x1="613.68" y1="6" x2="613.68" y2="8" stroke="#8a8d94" stroke-width="0.6"/>
<line x1="630.22" y1="6" x2="630.22" y2="8" stroke="#8a8d94" stroke-width="0.6"/>
</svg>
<div id="rulerL" class="a"></div>
<svg class="a" style="left:0px;top:73px" width="7" height="265" viewBox="0 0 7 265">
<line x1="0" y1="4.30" x2="7" y2="4.30" stroke="#7c7f86" stroke-width="0.7"/>
<text transform="translate(5,3.10) rotate(-90)" font-size="4.4" fill="#55585f" font-family="Liberation Sans">3000</text>
<line x1="5.6" y1="12.59" x2="7" y2="12.59" stroke="#8a8d94" stroke-width="0.6"/>
<line x1="5.6" y1="20.88" x2="7" y2="20.88" stroke="#8a8d94" stroke-width="0.6"/>
<line x1="5.6" y1="29.17" x2="7" y2="29.17" stroke="#8a8d94" stroke-width="0.6"/>
<line x1="5.6" y1="37.46" x2="7" y2="37.46" stroke="#8a8d94" stroke-width="0.6"/>
<line x1="0" y1="45.75" x2="7" y2="45.75" stroke="#7c7f86" stroke-width="0.7"/>
<text transform="translate(5,44.55) rotate(-90)" font-size="4.4" fill="#55585f" font-family="Liberation Sans">2500</text>
<line x1="5.6" y1="54.04" x2="7" y2="54.04" stroke="#8a8d94" stroke-width="0.6"/>
<line x1="5.6" y1="62.33" x2="7" y2="62.33" stroke="#8a8d94" stroke-width="0.6"/>
<line x1="5.6" y1="70.62" x2="7" y2="70.62" stroke="#8a8d94" stroke-width="0.6"/>
<line x1="5.6" y1="78.91" x2="7" y2="78.91" stroke="#8a8d94" stroke-width="0.6"/>
<line x1="0" y1="87.20" x2="7" y2="87.20" stroke="#7c7f86" stroke-width="0.7"/>
<text transform="translate(5,86.00) rotate(-90)" font-size="4.4" fill="#55585f" font-family="Liberation Sans">2000</text>
<line x1="5.6" y1="95.49" x2="7" y2="95.49" stroke="#8a8d94" stroke-width="0.6"/>
<line x1="5.6" y1="103.78" x2="7" y2="103.78" stroke="#8a8d94" stroke-width="0.6"/>
<line x1="5.6" y1="112.07" x2="7" y2="112.07" stroke="#8a8d94" stroke-width="0.6"/>
<line x1="5.6" y1="120.36" x2="7" y2="120.36" stroke="#8a8d94" stroke-width="0.6"/>
<line x1="0" y1="128.65" x2="7" y2="128.65" stroke="#7c7f86" stroke-width="0.7"/>
<text transform="translate(5,127.45) rotate(-90)" font-size="4.4" fill="#55585f" font-family="Liberation Sans">1500</text>
<line x1="5.6" y1="136.94" x2="7" y2="136.94" stroke="#8a8d94" stroke-width="0.6"/>
<line x1="5.6" y1="145.23" x2="7" y2="145.23" stroke="#8a8d94" stroke-width="0.6"/>
<line x1="5.6" y1="153.52" x2="7" y2="153.52" stroke="#8a8d94" stroke-width="0.6"/>
<line x1="5.6" y1="161.81" x2="7" y2="161.81" stroke="#8a8d94" stroke-width="0.6"/>
<line x1="0" y1="170.10" x2="7" y2="170.10" stroke="#7c7f86" stroke-width="0.7"/>
<text transform="translate(5,168.90) rotate(-90)" font-size="4.4" fill="#55585f" font-family="Liberation Sans">1000</text>
<line x1="5.6" y1="178.39" x2="7" y2="178.39" stroke="#8a8d94" stroke-width="0.6"/>
<line x1="5.6" y1="186.68" x2="7" y2="186.68" stroke="#8a8d94" stroke-width="0.6"/>
<line x1="5.6" y1="194.97" x2="7" y2="194.97" stroke="#8a8d94" stroke-width="0.6"/>
<line x1="5.6" y1="203.26" x2="7" y2="203.26" stroke="#8a8d94" stroke-width="0.6"/>
<line x1="0" y1="211.55" x2="7" y2="211.55" stroke="#7c7f86" stroke-width="0.7"/>
<text transform="translate(5,210.35) rotate(-90)" font-size="4.4" fill="#55585f" font-family="Liberation Sans">500</text>
<line x1="5.6" y1="219.84" x2="7" y2="219.84" stroke="#8a8d94" stroke-width="0.6"/>
<line x1="5.6" y1="228.13" x2="7" y2="228.13" stroke="#8a8d94" stroke-width="0.6"/>
<line x1="5.6" y1="236.42" x2="7" y2="236.42" stroke="#8a8d94" stroke-width="0.6"/>
<line x1="5.6" y1="244.71" x2="7" y2="244.71" stroke="#8a8d94" stroke-width="0.6"/>
<line x1="0" y1="253.00" x2="7" y2="253.00" stroke="#7c7f86" stroke-width="0.7"/>
<text transform="translate(5,251.80) rotate(-90)" font-size="4.4" fill="#55585f" font-family="Liberation Sans">0</text>
<line x1="5.6" y1="261.29" x2="7" y2="261.29" stroke="#8a8d94" stroke-width="0.6"/>
</svg>
<div id="canvas" class="a"></div>
<svg class="a" style="left:7px;top:73px" width="631" height="265" viewBox="0 0 631 265">
<line x1="9.97" y1="0" x2="9.97" y2="265" stroke="#24303c" stroke-width="1"/>
<line x1="18.24" y1="0" x2="18.24" y2="265" stroke="#24303c" stroke-width="1"/>
<line x1="26.51" y1="0" x2="26.51" y2="265" stroke="#24303c" stroke-width="1"/>
<line x1="34.78" y1="0" x2="34.78" y2="265" stroke="#24303c" stroke-width="1"/>
<line x1="51.32" y1="0" x2="51.32" y2="265" stroke="#24303c" stroke-width="1"/>
<line x1="59.59" y1="0" x2="59.59" y2="265" stroke="#24303c" stroke-width="1"/>
<line x1="67.86" y1="0" x2="67.86" y2="265" stroke="#24303c" stroke-width="1"/>
<line x1="76.13" y1="0" x2="76.13" y2="265" stroke="#24303c" stroke-width="1"/>
<line x1="92.67" y1="0" x2="92.67" y2="265" stroke="#24303c" stroke-width="1"/>
<line x1="100.94" y1="0" x2="100.94" y2="265" stroke="#24303c" stroke-width="1"/>
<line x1="109.21" y1="0" x2="109.21" y2="265" stroke="#24303c" stroke-width="1"/>
<line x1="117.48" y1="0" x2="117.48" y2="265" stroke="#24303c" stroke-width="1"/>
<line x1="134.02" y1="0" x2="134.02" y2="265" stroke="#24303c" stroke-width="1"/>
<line x1="142.29" y1="0" x2="142.29" y2="265" stroke="#24303c" stroke-width="1"/>
<line x1="150.56" y1="0" x2="150.56" y2="265" stroke="#24303c" stroke-width="1"/>
<line x1="158.83" y1="0" x2="158.83" y2="265" stroke="#24303c" stroke-width="1"/>
<line x1="175.37" y1="0" x2="175.37" y2="265" stroke="#24303c" stroke-width="1"/>
<line x1="183.64" y1="0" x2="183.64" y2="265" stroke="#24303c" stroke-width="1"/>
<line x1="191.91" y1="0" x2="191.91" y2="265" stroke="#24303c" stroke-width="1"/>
<line x1="200.18" y1="0" x2="200.18" y2="265" stroke="#24303c" stroke-width="1"/>
<line x1="216.72" y1="0" x2="216.72" y2="265" stroke="#24303c" stroke-width="1"/>
<line x1="224.99" y1="0" x2="224.99" y2="265" stroke="#24303c" stroke-width="1"/>
<line x1="233.26" y1="0" x2="233.26" y2="265" stroke="#24303c" stroke-width="1"/>
<line x1="241.53" y1="0" x2="241.53" y2="265" stroke="#24303c" stroke-width="1"/>
<line x1="258.07" y1="0" x2="258.07" y2="265" stroke="#24303c" stroke-width="1"/>
<line x1="266.34" y1="0" x2="266.34" y2="265" stroke="#24303c" stroke-width="1"/>
<line x1="274.61" y1="0" x2="274.61" y2="265" stroke="#24303c" stroke-width="1"/>
<line x1="282.88" y1="0" x2="282.88" y2="265" stroke="#24303c" stroke-width="1"/>
<line x1="299.42" y1="0" x2="299.42" y2="265" stroke="#24303c" stroke-width="1"/>
<line x1="307.69" y1="0" x2="307.69" y2="265" stroke="#24303c" stroke-width="1"/>
<line x1="315.96" y1="0" x2="315.96" y2="265" stroke="#24303c" stroke-width="1"/>
<line x1="324.23" y1="0" x2="324.23" y2="265" stroke="#24303c" stroke-width="1"/>
<line x1="340.77" y1="0" x2="340.77" y2="265" stroke="#24303c" stroke-width="1"/>
<line x1="349.04" y1="0" x2="349.04" y2="265" stroke="#24303c" stroke-width="1"/>
<line x1="357.31" y1="0" x2="357.31" y2="265" stroke="#24303c" stroke-width="1"/>
<line x1="365.58" y1="0" x2="365.58" y2="265" stroke="#24303c" stroke-width="1"/>
<line x1="382.12" y1="0" x2="382.12" y2="265" stroke="#24303c" stroke-width="1"/>
<line x1="390.39" y1="0" x2="390.39" y2="265" stroke="#24303c" stroke-width="1"/>
<line x1="398.66" y1="0" x2="398.66" y2="265" stroke="#24303c" stroke-width="1"/>
<line x1="406.93" y1="0" x2="406.93" y2="265" stroke="#24303c" stroke-width="1"/>
<line x1="423.47" y1="0" x2="423.47" y2="265" stroke="#24303c" stroke-width="1"/>
<line x1="431.74" y1="0" x2="431.74" y2="265" stroke="#24303c" stroke-width="1"/>
<line x1="440.01" y1="0" x2="440.01" y2="265" stroke="#24303c" stroke-width="1"/>
<line x1="448.28" y1="0" x2="448.28" y2="265" stroke="#24303c" stroke-width="1"/>
<line x1="464.82" y1="0" x2="464.82" y2="265" stroke="#24303c" stroke-width="1"/>
<line x1="473.09" y1="0" x2="473.09" y2="265" stroke="#24303c" stroke-width="1"/>
<line x1="481.36" y1="0" x2="481.36" y2="265" stroke="#24303c" stroke-width="1"/>
<line x1="489.63" y1="0" x2="489.63" y2="265" stroke="#24303c" stroke-width="1"/>
<line x1="506.17" y1="0" x2="506.17" y2="265" stroke="#24303c" stroke-width="1"/>
<line x1="514.44" y1="0" x2="514.44" y2="265" stroke="#24303c" stroke-width="1"/>
<line x1="522.71" y1="0" x2="522.71" y2="265" stroke="#24303c" stroke-width="1"/>
<line x1="530.98" y1="0" x2="530.98" y2="265" stroke="#24303c" stroke-width="1"/>
<line x1="547.52" y1="0" x2="547.52" y2="265" stroke="#24303c" stroke-width="1"/>
<line x1="555.79" y1="0" x2="555.79" y2="265" stroke="#24303c" stroke-width="1"/>
<line x1="564.06" y1="0" x2="564.06" y2="265" stroke="#24303c" stroke-width="1"/>
<line x1="572.33" y1="0" x2="572.33" y2="265" stroke="#24303c" stroke-width="1"/>
<line x1="588.87" y1="0" x2="588.87" y2="265" stroke="#24303c" stroke-width="1"/>
<line x1="597.14" y1="0" x2="597.14" y2="265" stroke="#24303c" stroke-width="1"/>
<line x1="605.41" y1="0" x2="605.41" y2="265" stroke="#24303c" stroke-width="1"/>
<line x1="613.68" y1="0" x2="613.68" y2="265" stroke="#24303c" stroke-width="1"/>
<line x1="630.22" y1="0" x2="630.22" y2="265" stroke="#24303c" stroke-width="1"/>
<line x1="0" y1="12.59" x2="631" y2="12.59" stroke="#24303c" stroke-width="1"/>
<line x1="0" y1="20.88" x2="631" y2="20.88" stroke="#24303c" stroke-width="1"/>
<line x1="0" y1="29.17" x2="631" y2="29.17" stroke="#24303c" stroke-width="1"/>
<line x1="0" y1="37.46" x2="631" y2="37.46" stroke="#24303c" stroke-width="1"/>
<line x1="0" y1="54.04" x2="631" y2="54.04" stroke="#24303c" stroke-width="1"/>
<line x1="0" y1="62.33" x2="631" y2="62.33" stroke="#24303c" stroke-width="1"/>
<line x1="0" y1="70.62" x2="631" y2="70.62" stroke="#24303c" stroke-width="1"/>
<line x1="0" y1="78.91" x2="631" y2="78.91" stroke="#24303c" stroke-width="1"/>
<line x1="0" y1="95.49" x2="631" y2="95.49" stroke="#24303c" stroke-width="1"/>
<line x1="0" y1="103.78" x2="631" y2="103.78" stroke="#24303c" stroke-width="1"/>
<line x1="0" y1="112.07" x2="631" y2="112.07" stroke="#24303c" stroke-width="1"/>
<line x1="0" y1="120.36" x2="631" y2="120.36" stroke="#24303c" stroke-width="1"/>
<line x1="0" y1="136.94" x2="631" y2="136.94" stroke="#24303c" stroke-width="1"/>
<line x1="0" y1="145.23" x2="631" y2="145.23" stroke="#24303c" stroke-width="1"/>
<line x1="0" y1="153.52" x2="631" y2="153.52" stroke="#24303c" stroke-width="1"/>
<line x1="0" y1="161.81" x2="631" y2="161.81" stroke="#24303c" stroke-width="1"/>
<line x1="0" y1="178.39" x2="631" y2="178.39" stroke="#24303c" stroke-width="1"/>
<line x1="0" y1="186.68" x2="631" y2="186.68" stroke="#24303c" stroke-width="1"/>
<line x1="0" y1="194.97" x2="631" y2="194.97" stroke="#24303c" stroke-width="1"/>
<line x1="0" y1="203.26" x2="631" y2="203.26" stroke="#24303c" stroke-width="1"/>
<line x1="0" y1="219.84" x2="631" y2="219.84" stroke="#24303c" stroke-width="1"/>
<line x1="0" y1="228.13" x2="631" y2="228.13" stroke="#24303c" stroke-width="1"/>
<line x1="0" y1="236.42" x2="631" y2="236.42" stroke="#24303c" stroke-width="1"/>
<line x1="0" y1="244.71" x2="631" y2="244.71" stroke="#24303c" stroke-width="1"/>
<line x1="0" y1="261.29" x2="631" y2="261.29" stroke="#24303c" stroke-width="1"/>
<line x1="1.70" y1="0" x2="1.70" y2="265" stroke="#2d3a47" stroke-width="1"/>
<line x1="43.05" y1="0" x2="43.05" y2="265" stroke="#2d3a47" stroke-width="1"/>
<line x1="84.40" y1="0" x2="84.40" y2="265" stroke="#2d3a47" stroke-width="1"/>
<line x1="125.75" y1="0" x2="125.75" y2="265" stroke="#2d3a47" stroke-width="1"/>
<line x1="167.10" y1="0" x2="167.10" y2="265" stroke="#2d3a47" stroke-width="1"/>
<line x1="208.45" y1="0" x2="208.45" y2="265" stroke="#2d3a47" stroke-width="1"/>
<line x1="249.80" y1="0" x2="249.80" y2="265" stroke="#2d3a47" stroke-width="1"/>
<line x1="291.15" y1="0" x2="291.15" y2="265" stroke="#2d3a47" stroke-width="1"/>
<line x1="332.50" y1="0" x2="332.50" y2="265" stroke="#2d3a47" stroke-width="1"/>
<line x1="373.85" y1="0" x2="373.85" y2="265" stroke="#2d3a47" stroke-width="1"/>
<line x1="415.20" y1="0" x2="415.20" y2="265" stroke="#2d3a47" stroke-width="1"/>
<line x1="456.55" y1="0" x2="456.55" y2="265" stroke="#2d3a47" stroke-width="1"/>
<line x1="497.90" y1="0" x2="497.90" y2="265" stroke="#2d3a47" stroke-width="1"/>
<line x1="539.25" y1="0" x2="539.25" y2="265" stroke="#2d3a47" stroke-width="1"/>
<line x1="580.60" y1="0" x2="580.60" y2="265" stroke="#2d3a47" stroke-width="1"/>
<line x1="621.95" y1="0" x2="621.95" y2="265" stroke="#2d3a47" stroke-width="1"/>
<line x1="0" y1="4.30" x2="631" y2="4.30" stroke="#2d3a47" stroke-width="1"/>
<line x1="0" y1="45.75" x2="631" y2="45.75" stroke="#2d3a47" stroke-width="1"/>
<line x1="0" y1="87.20" x2="631" y2="87.20" stroke="#2d3a47" stroke-width="1"/>
<line x1="0" y1="128.65" x2="631" y2="128.65" stroke="#2d3a47" stroke-width="1"/>
<line x1="0" y1="170.10" x2="631" y2="170.10" stroke="#2d3a47" stroke-width="1"/>
<line x1="0" y1="211.55" x2="631" y2="211.55" stroke="#2d3a47" stroke-width="1"/>
<line x1="0" y1="253.00" x2="631" y2="253.00" stroke="#2d3a47" stroke-width="1"/>
</svg>
<svg class="a" style="left:0;top:0" width="750" height="400" viewBox="0 0 750 400">
<rect x="256.8" y="78" width="124.2" height="248" fill="none" stroke="#7f8890" stroke-width="1.1"/>
<circle cx="256.8" cy="326" r="3.6" fill="#5c3448" opacity="0.75"/>
<line x1="256.8" y1="316" x2="256.8" y2="332.4" stroke="#c8ccd0" stroke-width="1"/>
<line x1="249.8" y1="326" x2="265" y2="326" stroke="#c8ccd0" stroke-width="1"/>
<rect x="255.3" y="324.5" width="3" height="3" fill="#3a2e3c" stroke="#d8c8cc" stroke-width="0.6" transform="rotate(45 256.8 326)"/>
<line x1="21.5" y1="297" x2="21.5" y2="324" stroke="#8e959c" stroke-width="0.9"/>
<line x1="21.5" y1="324.7" x2="50" y2="324.7" stroke="#8e959c" stroke-width="0.9"/>
<rect x="18" y="322" width="5" height="5" fill="none" stroke="#a6acb2" stroke-width="0.9"/>
<text x="19.8" y="297.6" font-size="4.2" fill="#b8bcc0" font-family="Liberation Sans">Y</text>
<text x="48.6" y="326.4" font-size="4.2" fill="#b8bcc0" font-family="Liberation Sans">X</text>
</svg>




<div class="a" style="left:639px;top:51px;width:111px;height:340px;background:#f1f1f1"></div>
<div class="a" style="left:639px;top:63px;width:1.6px;height:328px;background:#fbfbfb"></div>
<div class="a" style="left:640.6px;top:63px;width:0.8px;height:328px;background:#ececec"></div>
<div class="a" style="left:639px;top:51.7px;width:111px;height:9.3px;background:#e9e9e9;border-bottom:1px solid #d4d4d4"></div>
<svg class="a" style="left:636px;top:50px" width="114" height="13" viewBox="636 50 114 13"><path d="M672 52.3 L705 52.3 L708.6 61 L674 61 Z" fill="#eeeeee" stroke="#c8c8c8" stroke-width="0.6"/><path d="M641.3 61.5 L645 52.3 L673.9 52.3 L676.6 61.5 Z" fill="#fbfbfb" stroke="#c8c8c8" stroke-width="0.6"/></svg>
<div class="r" style="left:646.1px;top:54.16px;color:#333;font-size:5.0px;">Run Control</div>
<div class="r" style="left:678.1px;top:54.80px;color:#333;font-size:4.9px;">Run Params</div>
<div class="a" style="left:644.5px;top:74px;width:14.0px;height:14.5px;background:#fafafa;border:1px solid #d2d2d2;border-radius:0.5px"></div>
<div class="a" style="left:664.5px;top:64.5px;width:14.0px;height:14.0px;background:#fafafa;border:1px solid #d2d2d2;border-radius:0.5px"></div>
<div class="a" style="left:664.5px;top:84.5px;width:14.0px;height:14.0px;background:#fafafa;border:1px solid #d2d2d2;border-radius:0.5px"></div>
<div class="a" style="left:684.5px;top:74px;width:14.0px;height:14.5px;background:#fafafa;border:1px solid #d2d2d2;border-radius:0.5px"></div>
<div class="a" style="left:703.5px;top:64.5px;width:14.5px;height:14.0px;background:#fafafa;border:1px solid #d2d2d2;border-radius:0.5px"></div>
<div class="a" style="left:703.5px;top:84.5px;width:14.5px;height:14.0px;background:#fafafa;border:1px solid #d2d2d2;border-radius:0.5px"></div>
<div class="a" style="left:723px;top:64.5px;width:23.5px;height:14.0px;background:#fafafa;border:1px solid #d2d2d2;border-radius:0.5px"></div>
<div class="a" style="left:723px;top:84.5px;width:23.5px;height:14.0px;background:#fafafa;border:1px solid #d2d2d2;border-radius:0.5px"></div>
<svg class="a" style="left:636px;top:60px" width="114" height="42" viewBox="636 60 114 42"><path d="M652.4 78.6 L649.2 81.5 L652.4 84.4" fill="none" stroke="#666" stroke-width="0.8"/><path d="M668.2 72.4 L671.5 69.2 L674.8 72.4" fill="none" stroke="#666" stroke-width="0.8"/><path d="M668.2 91 L671.5 94.3 L674.8 91" fill="none" stroke="#666" stroke-width="0.8"/><path d="M690.6 78.6 L693.8 81.5 L690.6 84.4" fill="none" stroke="#666" stroke-width="0.8"/><path d="M706.3 74.4 L710.7 68.6 L715.1 74.4 Z" fill="none" stroke="#707070" stroke-width="0.75"/><path d="M706.5 89.2 L715 89.2 L710.75 95 Z" fill="none" stroke="#707070" stroke-width="0.75"/><path d="M727.6 69 V74.4 M727.8 69.2 L730.2 70.6 L727.8 72" fill="#999" stroke="#999" stroke-width="0.6"/></svg>
<div class="r" style="left:731px;top:69.29px;color:#b2b2b2;font-size:5.2px;">Home</div>
<div class="r" style="left:726px;top:89.14px;color:#b2b2b2;font-size:5.05px;">Z Origin</div>
<div class="a" style="left:644.8px;top:105.0px;width:4.8px;height:4.8px;background:#fcfcfc;border:0.7px solid #c4c4c4"></div>
<div class="r" style="left:651px;top:104.81px;color:#3a3a3a;font-size:4.85px;">Step</div>
<div class="a" style="left:666.4px;top:102.7px;width:25.2px;height:8.8px;background:#fdfdfd;border:1px solid #d8d8d8;border-radius:0.5px"></div>
<div class="r" style="left:668.2px;top:104.60px;color:#3a3a3a;font-size:4.6px;">10</div>
<div class="r" style="left:692.6px;top:104.42px;color:#3a3a3a;font-size:5.4px;">mm</div>
<div class="a" style="left:707.6px;top:102.7px;width:38.4px;height:8.8px;background:#fdfdfd;border:1px solid #d8d8d8;border-radius:0.5px"></div>
<div class="r" style="left:708.8px;top:104.46px;color:#222;font-size:5.0px;">Mark P1</div>
<div class="a" style="left:644.8px;top:116.9px;width:4.8px;height:4.8px;background:#fcfcfc;border:0.7px solid #c4c4c4"></div>
<div class="r" style="left:651.2px;top:116.50px;color:#3a3a3a;font-size:4.6px;">Fast</div>
<div class="a" style="left:666.4px;top:113.8px;width:25.2px;height:9.4px;background:#fdfdfd;border:1px solid #d8d8d8;border-radius:0.5px"></div>
<div class="r" style="left:668.2px;top:116.00px;color:#3a3a3a;font-size:4.6px;">30</div>
<div class="r" style="left:692.4px;top:115.89px;color:#3a3a3a;font-size:5.5px;">mm/s</div>
<div class="a" style="left:707.6px;top:114px;width:18.0px;height:9.2px;background:#fafafa;border:1px solid #d2d2d2;border-radius:0.5px"></div>
<div class="r" style="left:711.1px;top:115.85px;color:#b2b2b2;font-size:5.3px;">Mark</div>
<div class="a" style="left:728.6px;top:114px;width:17.4px;height:9.2px;background:#fafafa;border:1px solid #d2d2d2;border-radius:0.5px"></div>
<div class="r" style="left:729.9px;top:115.99px;color:#b2b2b2;font-size:4.9px;">Return</div>
<svg class="a" style="left:636px;top:100px" width="114" height="26" viewBox="636 100 114 26"><path d="M687.2 107.3 L689.2 107.3 L688.2 108.4Z M687.2 118.7 L689.2 118.7 L688.2 119.8Z M742.2 107.3 L744.2 107.3 L743.2 108.4Z" fill="#444"/></svg>
<div class="a" style="left:644.6px;top:127.4px;width:31.6px;height:10.2px;background:#fafafa;border:1px solid #cfcfcf;border-radius:0.5px"></div>
<div class="r" style="left:657.2px;top:130.11px;color:#b2b2b2;font-size:5.15px;">Follow</div>
<div class="a" style="left:680.1px;top:127.4px;width:31.4px;height:10.2px;background:#fafafa;border:1px solid #cfcfcf;border-radius:0.5px"></div>
<div class="r" style="left:695.2px;top:130.20px;color:#b2b2b2;font-size:4.9px;">Gas</div>
<div class="a" style="left:644.6px;top:139px;width:31.6px;height:9.9px;background:#fafafa;border:1px solid #cfcfcf;border-radius:0.5px"></div>
<div class="r" style="left:656.8px;top:141.70px;color:#b2b2b2;font-size:4.75px;">Shutter</div>
<div class="a" style="left:680.1px;top:139px;width:31.4px;height:9.9px;background:#fafafa;border:1px solid #cfcfcf;border-radius:0.5px"></div>
<div class="r" style="left:689.8px;top:141.44px;color:#b2b2b2;font-size:5.5px;">Redlight</div>
<div class="a" style="left:715.4px;top:139px;width:31.2px;height:9.9px;background:#fafafa;border:1px solid #cfcfcf;border-radius:0.5px"></div>
<div class="r" style="left:728.8px;top:141.57px;color:#b2b2b2;font-size:5.1px;">Laser</div>
<div class="a" style="left:644.6px;top:177.7px;width:31.6px;height:10.6px;background:#fafafa;border:1px solid #cfcfcf;border-radius:0.5px"></div>
<div class="r" style="left:659.3px;top:180.70px;color:#b2b2b2;font-size:4.9px;">Start</div>
<div class="a" style="left:680.1px;top:177.7px;width:31.4px;height:10.6px;background:#fafafa;border:1px solid #cfcfcf;border-radius:0.5px"></div>
<div class="r" style="left:692.8px;top:180.77px;color:#b2b2b2;font-size:4.7px;">Pause</div>
<div class="a" style="left:715.4px;top:177.7px;width:31.2px;height:10.6px;background:#fafafa;border:1px solid #cfcfcf;border-radius:0.5px"></div>
<div class="r" style="left:729.7px;top:180.70px;color:#3a3a3a;font-size:4.9px;font-weight:bold;">Stop</div>
<div class="a" style="left:644.6px;top:191.3px;width:31.6px;height:11.0px;background:#fafafa;border:1px solid #cfcfcf;border-radius:0.5px"></div>
<div class="r" style="left:655.5px;top:194.36px;color:#b2b2b2;font-size:5.3px;">Dry Cut</div>
<div class="a" style="left:680.1px;top:191.3px;width:31.4px;height:11.0px;background:#fafafa;border:1px solid #cfcfcf;border-radius:0.5px"></div>
<div class="r" style="left:692.4px;top:194.46px;color:#b2b2b2;font-size:5.0px;">Frame</div>
<div class="a" style="left:715.4px;top:191.3px;width:31.2px;height:11.0px;background:#fafafa;border:1px solid #cfcfcf;border-radius:0.5px"></div>
<div class="r" style="left:730.5px;top:194.60px;color:#3a3a3a;font-size:4.6px;font-weight:bold;">Sim</div>
<div class="a" style="left:644.6px;top:204.9px;width:31.6px;height:11.0px;background:#fafafa;border:1px solid #cfcfcf;border-radius:0.5px"></div>
<div class="r" style="left:655.5px;top:208.06px;color:#b2b2b2;font-size:5.0px;">BreakPt</div>
<div class="a" style="left:680.1px;top:204.9px;width:31.4px;height:11.0px;background:#fafafa;border:1px solid #cfcfcf;border-radius:0.5px"></div>
<div class="r" style="left:688.6px;top:208.06px;color:#b2b2b2;font-size:5.0px;">Backward</div>
<div class="a" style="left:715.4px;top:204.9px;width:31.2px;height:11.0px;background:#fafafa;border:1px solid #cfcfcf;border-radius:0.5px"></div>
<div class="r" style="left:725.3px;top:208.03px;color:#b2b2b2;font-size:5.1px;">Forward</div>
<div class="a" style="left:644.6px;top:218.5px;width:31.6px;height:11.1px;background:#fafafa;border:1px solid #cfcfcf;border-radius:0.5px"></div>
<div class="r" style="left:653.8px;top:221.68px;color:#b2b2b2;font-size:5.1px;">LoopPa..</div>
<div class="a" style="left:715.4px;top:127.4px;width:31.2px;height:10.2px;background:#f6f6f6;border:1px solid #d0d0d0;border-radius:0.5px"></div>
<div class="a" style="left:739.8px;top:128.4px;width:5.8px;height:8.2px;background:#dcdcdc"></div>
<div class="r" style="left:716.4px;top:129.66px;color:#b2b2b2;font-size:5.3px;">Not Use</div>
<svg class="a" style="left:636px;top:125px" width="114" height="106" viewBox="636 125 114 106"><rect x="649.2" y="131" width="2.4" height="2.4" fill="#bbb"/><rect x="684.6" y="131" width="2.4" height="2.4" fill="#bbb"/><path d="M742 132 L744 132 L743 133.2Z" fill="#999"/><path d="M649.2 142.2 V145.8 M649.2 142.2 H651" stroke="#bbb" stroke-width="0.7"/><circle cx="685.2" cy="143.3" r="1.2" fill="#bbb"/><path d="M719.8 142.4 V145.8 M719.8 142.4 H721.4" stroke="#bbb" stroke-width="0.7"/><path d="M648.6 181.2 L651.4 183 L648.6 184.8Z" fill="#aaa"/><path d="M684.3 181.2 V184.8 M686.6 181.2 V184.8" stroke="#bbb" stroke-width="0.9"/><rect x="719" y="181" width="3.6" height="3.8" fill="#2b2f5c"/><circle cx="649.6" cy="196.8" r="1.6" fill="none" stroke="#bbb" stroke-width="0.6"/><circle cx="649.6" cy="196.8" r="0.5" fill="#bbb"/><path d="M684.2 195 L688 198.6 M688 195 L684.2 198.6" stroke="#999" stroke-width="0.9"/><rect x="685.2" y="196" width="1.8" height="1.6" fill="#888"/><path d="M719.5 195 H723.8 V197.6 H719.5Z M721.6 197.6 V199 M720.4 199 H722.8" fill="none" stroke="#999" stroke-width="0.6"/><rect x="648.8" y="208.4" width="3.4" height="3.8" fill="none" stroke="#bbb" stroke-width="0.6"/><path d="M683.8 208.6 V212.6 M687.6 208.6 L684.6 210.6 L687.6 212.6Z" fill="#888" stroke="#888" stroke-width="0.6"/><path d="M719.2 208.6 L722.2 210.6 L719.2 212.6Z M723.2 208.6 V212.6" fill="#888" stroke="#888" stroke-width="0.6"/><path d="M648.6 226 L650.6 222 L652.6 226 Z" fill="none" stroke="#aaa" stroke-width="0.6"/></svg>
<div class="r" style="left:644.8px;top:156.06px;color:#3a3a3a;font-size:5.3px;">Mar</div>
<div class="a" style="left:655px;top:154.8px;width:31px;height:7.6px;background:#0b0b0b"></div>
<div class="r" style="left:659px;top:155.65px;color:#f4f4f4;font-size:5.9px;">00:00:28</div>
<div class="r" style="left:690px;top:156.16px;color:#3a3a3a;font-size:5.0px;">Cou</div>
<div class="a" style="left:700.3px;top:155px;width:26.2px;height:7.2px;background:#1f2c38;border:0.8px solid #080808"></div>
<div class="r" style="left:721.9px;top:155.75px;color:#e8e8e8;font-size:5.6px;">0</div>
<div class="a" style="left:729.2px;top:153.6px;width:17.2px;height:9.6px;background:#fcfcfc;border:1px solid #d0d0d0;border-radius:0.5px"></div>
<div class="r" style="left:732px;top:156.63px;color:#222;font-size:4.8px;">Clear</div>
<div class="a" style="left:645.9px;top:169.4px;width:4.0px;height:4.0px;background:#fcfcfc;border:0.7px solid #d0d0d0"></div>
<div class="r" style="left:651px;top:168.68px;color:#bdbdbd;font-size:4.95px;">Enable Loop M...</div>
<div class="a" style="left:692.5px;top:169.4px;width:4.0px;height:4.0px;background:#fcfcfc;border:0.7px solid #d0d0d0"></div>
<div class="r" style="left:698px;top:168.71px;color:#bdbdbd;font-size:4.86px;">Only Selected G...</div>
<div class="a" style="left:0;top:338px;width:434px;height:45.3px;background:#fff;border-top:1.6px solid #e6e6e6;border-right:1px solid #d4d4d4;border-bottom:0.8px solid #dcdcdc"></div>
<div class="r" style="left:0.5px;top:342.7px;color:#333;font-size:4.7px;">[14:42:41] Controller connecting failed</div>
<div class="a" style="left:0;top:383.3px;width:434px;height:7.7px;background:#e9e9e9"></div>
<div class="a" style="left:0;top:383.3px;width:26.8px;height:7.7px;background:#fbfbfb"></div>
<div class="a" style="left:27px;top:383.3px;width:28.5px;height:7.7px;background:#efebea;border-left:0.6px solid #d8d0d0;border-right:0.6px solid #d8d0d0"></div>
<div class="r" style="left:6.8px;top:385.1px;color:#333;font-size:4.6px;">Message</div>
<div class="r" style="left:36.2px;top:385.1px;color:#333;font-size:4.6px;">Warning</div>
<div class="r" style="left:64.8px;top:385.1px;color:#333;font-size:4.6px;">Process</div>
<svg class="a" style="left:0;top:383px" width="100" height="8" viewBox="0 383 100 8"><path d="M1.2 390 V386.6 Q1.2 385.2 2.8 385.2 Q4.4 385.2 4.4 386.6 V390" fill="none" stroke="#9a9a9a" stroke-width="0.6"/><rect x="3.4" y="388.2" width="1.2" height="1.8" fill="#333"/><rect x="31" y="384.6" width="1.1" height="3" fill="#d02020"/><rect x="31" y="388.3" width="1.1" height="1" fill="#d02020"/><path d="M59.8 385.6 L63.4 385.6 L61.6 388.6Z" fill="#a02828"/></svg>
<div class="a" style="left:434px;top:338px;width:205px;height:53px;background:#f0f0f0;border-top:1.6px solid #e6e6e6"></div>
<div class="a" style="left:440.6px;top:341px;width:30.8px;height:9.4px;background:#fafafa;border:1px solid #d6d6d6"></div>
<div class="a" style="left:443px;top:342.5px;width:6.6px;height:6.2px;background:#11dd11"></div>
<div class="r" style="left:452.8px;top:343.9px;color:#333;font-size:4.9px;">Layer 1</div>
<div class="a" style="left:474.40px;top:341.7px;width:8.2px;height:8.2px;background:#ffffff;border:0.5px solid #d4d4d4"></div>
<div class="a" style="left:485.46px;top:341.7px;width:8.2px;height:8.2px;background:#11e011;border:0.5px solid #fafafa"></div>
<div class="a" style="left:496.52px;top:341.7px;width:8.2px;height:8.2px;background:#11e6ee;border:0.5px solid #fafafa"></div>
<div class="a" style="left:507.58px;top:341.7px;width:8.2px;height:8.2px;background:#ea8ad8;border:0.5px solid #fafafa"></div>
<div class="a" style="left:518.64px;top:341.7px;width:8.2px;height:8.2px;background:#f6f200;border:0.5px solid #fafafa"></div>
<div class="a" style="left:529.70px;top:341.7px;width:8.2px;height:8.2px;background:#1a8acb;border:0.5px solid #fafafa"></div>
<div class="a" style="left:540.76px;top:341.7px;width:8.2px;height:8.2px;background:#6a80aa;border:0.5px solid #fafafa"></div>
<div class="a" style="left:551.82px;top:341.7px;width:8.2px;height:8.2px;background:#a9d0e6;border:0.5px solid #fafafa"></div>
<div class="a" style="left:562.88px;top:341.7px;width:8.2px;height:8.2px;background:#a8794f;border:0.5px solid #fafafa"></div>
<div class="a" style="left:573.94px;top:341.7px;width:8.2px;height:8.2px;background:#d8141e;border:0.5px solid #fafafa"></div>
<div class="a" style="left:585.00px;top:341.7px;width:8.2px;height:8.2px;background:#c2c2ca;border:0.5px solid #fafafa"></div>
<div class="a" style="left:0;top:390.4px;width:750px;height:0.8px;background:#fdfdfd"></div>
<div class="a" style="left:0;top:391px;width:750px;height:9px;background:linear-gradient(#2c3762 0,#35477b 1.2px,#3e5287 2.6px,#3d5186 6px,#2f3f6c 7.6px,#10162a 8.6px,#05070e 9px)"></div>
<div class="r" style="left:2px;top:394.1px;color:#dfe5f2;font-size:4.8px;-webkit-text-stroke-width:0.05px;">MCC &lt;Offline&gt;</div>
<div class="r" style="left:38.7px;top:394.1px;color:#dfe5f2;font-size:4.8px;-webkit-text-stroke-width:0.05px;">FTC &lt;Offline&gt;</div>
<div class="r" style="left:73px;top:394.1px;color:#dfe5f2;font-size:4.8px;-webkit-text-stroke-width:0.05px;">Laser &lt;Offline&gt;</div>
<div class="r" style="left:110.5px;top:393.1px;color:#dfe5f2;font-size:5.1px;-webkit-text-stroke-width:0.05px;">Monitor &lt;Offline&gt;</div>
<div class="r" style="left:153.5px;top:394.1px;color:#dfe5f2;font-size:4.35px;-webkit-text-stroke-width:0.05px;">X: 99999.000</div>
<div class="r" style="left:181.5px;top:394.1px;color:#dfe5f2;font-size:4.35px;-webkit-text-stroke-width:0.05px;">Y: 99999.000</div>
<div class="r" style="left:209.5px;top:394.1px;color:#dfe5f2;font-size:4.35px;-webkit-text-stroke-width:0.05px;">Z: 99999.000</div>
<div class="r" style="left:236px;top:394.1px;color:#dfe5f2;font-size:4.35px;-webkit-text-stroke-width:0.05px;">W: 99999.000</div>
<div class="r" style="left:270.5px;top:394.1px;color:#dfe5f2;font-size:4.85px;-webkit-text-stroke-width:0.05px;">Speed (mm/s):</div>
<div class="r" style="left:303.6px;top:394.1px;color:#dfe5f2;font-size:4.35px;-webkit-text-stroke-width:0.05px;">9999</div>
<div class="r" style="left:319px;top:394.1px;color:#dfe5f2;font-size:4.35px;-webkit-text-stroke-width:0.05px;">Ping: 999999999</div>
<div class="r" style="left:695.5px;top:394.1px;color:#dfe5f2;font-size:4.55px;-webkit-text-stroke-width:0.05px;">X: -2933.50 Y: 3140.53</div>
<div class="a" style="left:742px;top:373px;width:17px;height:17px;border-radius:50%;background:#3dbf5e;box-shadow:0 0 1px #8ad8a0"></div>
<div class="r" style="left:747px;top:378px;color:#e8f8ea;font-size:4px">A</div>

</body></html>
